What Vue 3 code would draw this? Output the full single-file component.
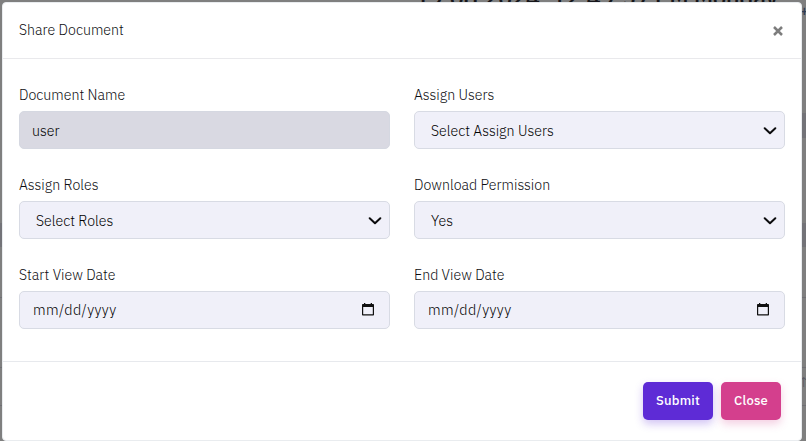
<script setup>
const fields = [
  { label: 'Document Name', value: 'user', kind: 'readonly' },
  { label: 'Assign Users', value: 'Select Assign Users', kind: 'select' },
  { label: 'Assign Roles', value: 'Select Roles', kind: 'select' },
  { label: 'Download Permission', value: 'Yes', kind: 'select' },
  { label: 'Start View Date', value: 'mm/dd/yyyy', kind: 'date' },
  { label: 'End View Date', value: 'mm/dd/yyyy', kind: 'date' },
]
</script>

<template>
  <div class="page">
    <div class="clock">19.08.2024, 12:49:57 PM Monday</div>
    <div class="band right first"></div>
    <div class="band right second"></div>
    <div class="band left second"></div>
    <div class="rule r1"></div>
    <div class="rule r2"></div>
    <div class="rule r3"></div>
    <div class="plus">+</div>
    <div class="arrow">↑</div>
    <div class="modal">
      <header>
        <span class="title">Share Document</span>
        <button class="x" aria-label="Close">
          <svg width="10" height="10" viewBox="0 0 10 10"><path d="M1 1L9 9M9 1L1 9" stroke="#7d7d7d" stroke-width="2.5" fill="none" /></svg>
        </button>
      </header>
      <main>
        <div v-for="f in fields" :key="f.label" class="field">
          <label>{{ f.label }}</label>
          <div class="control" :class="f.kind">
            <span>{{ f.value }}</span>
            <svg v-if="f.kind === 'select'" class="chev" width="14" height="8" viewBox="0 0 14 8"><path d="M1.7 1.2L7 6.2L12.3 1.2" fill="none" stroke="#0b0b0d" stroke-width="2" stroke-linecap="round" stroke-linejoin="round" /></svg>
            <svg v-if="f.kind === 'date'" class="cal" width="12" height="13" viewBox="0 0 12 13"><path d="M2 0h1.3v1h5.4V0H10v1h1.2q.8 0 .8.8v9.9q0 .8-.8.8H.8q-.8 0-.8-.8V1.8Q0 1 .8 1H2zM1.2 4v7.3h9.6V4z" fill="#111" fill-rule="evenodd" /></svg>
          </div>
        </div>
      </main>
      <footer>
        <button class="btn submit">Submit</button>
        <button class="btn close">Close</button>
      </footer>
    </div>
  </div>
</template>

<style>
body { margin: 0; overflow: hidden; }
</style>

<style scoped>
* { box-sizing: border-box; }
.page { position: relative; width: 806px; height: 441px; padding: 2px 4px 0 2px; overflow: hidden; background: #7f7f7f; font-family: "IBM Plex Sans", Roboto, "Liberation Sans", sans-serif; font-size: 14.2px; font-weight: 300; letter-spacing: 0; color: #0c0c10; }
.clock { position: absolute; left: 415px; top: -17px; font-size: 24px; font-weight: 500; line-height: 28px; white-space: nowrap; color: #16161a; letter-spacing: -.42px; }
.band { position: absolute; width: 4px; background: #737378; }
.right { left: 802px; }
.left { left: 0; width: 2px; }
.first { top: 113px; height: 25px; }
.second { top: 223px; height: 24px; }
.rule { position: absolute; left: 0; width: 806px; height: 1px; background: #6f6f74; }
.r1 { top: 297px; }
.r2 { top: 367px; }
.r3 { top: 405px; }
.plus { position: absolute; left: 800px; top: 2px; color: #303b52; line-height: 18px; font-weight: 500; }
.arrow { position: absolute; left: 798px; top: 373px; color: #55555e; line-height: 18px; }
.modal { position: relative; width: 800px; height: 439px; background: #fff; border: 1px solid #e9ecef; border-radius: 4px; display: flex; flex-direction: column; }
header { height: 56px; flex: none; border-bottom: 1px solid #e9e9ec; display: flex; align-items: center; justify-content: space-between; padding: 0 18px 0 16px; }
.title { margin-top: -3px; }
.x { padding: 0; border: 0; background: none; display: flex; margin-top: 1px; }
main { height: 302px; flex: none; padding: 26px 16px 0; display: grid; grid-template-columns: 371px 371px; column-gap: 24px; grid-auto-rows: 90px; align-content: start; }
label { display: block; height: 26px; line-height: 19px; white-space: nowrap; }
.control { height: 38px; border: 1px solid #d8dbe4; border-radius: 5px; background: #f0f0f9; display: flex; align-items: center; justify-content: space-between; padding: 0 7px 0 16px; color: #000; line-height: 19px; }
.control.date { padding: 0 15px 0 13px; font-size: 14.4px; letter-spacing: .42px; }
.control.date span { margin-top: -1px; }
.control.readonly { background: #d9d9e2; border-color: #d5d8e1; padding-left: 12px; }
.chev { margin-top: 2px; }
.cal { margin-top: -1px; }
footer { flex: 1; border-top: 1px solid #e7e9ed; display: flex; align-items: flex-start; justify-content: flex-end; gap: 8px; padding: 20px 20px 0 0; }
.btn { height: 38px; border: 0; border-radius: 5px; padding: 0; color: #fff; font: 500 13px/38px "IBM Plex Sans", Roboto, sans-serif; letter-spacing: .2px; }
.submit { width: 70px; background: #5e2bd6; box-shadow: 0 4px 8px rgba(94, 43, 214, .28); }
.close { width: 60px; background: #d43f8d; box-shadow: 0 4px 8px rgba(212, 63, 141, .25); }
</style>
